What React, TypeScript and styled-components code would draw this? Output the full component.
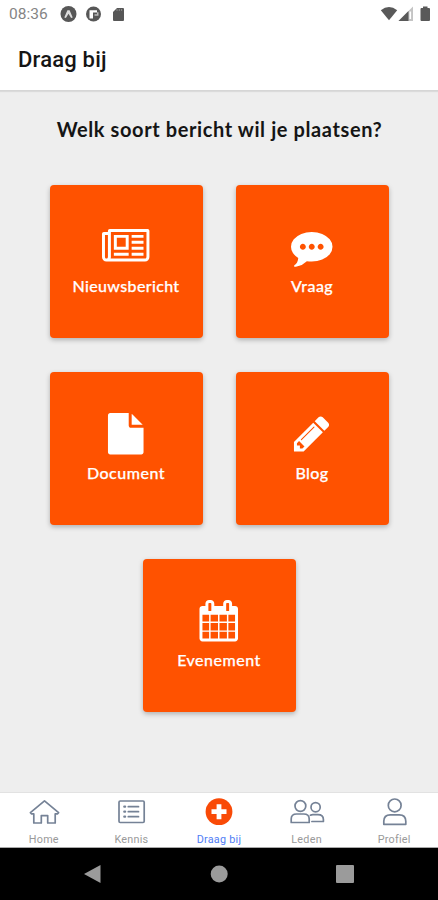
import React from 'react';
import styled, { createGlobalStyle } from 'styled-components';

const GlobalStyle = createGlobalStyle`
  * { box-sizing: border-box; }
  html, body { margin: 0; padding: 0; background: #eee; }
`;

const Screen = styled.div`
  display: flex;
  flex-direction: column;
  width: 438px;
  height: 900px;
  overflow: hidden;
  background: #eeeeee;
  font-family: Lato, 'Open Sans', sans-serif;
`;

const StatusBar = styled.div`
  display: flex;
  justify-content: space-between;
  flex: none;
  height: 28px;
  padding: 0 7px 0 9px;
  background: #fff;
`;

const StatusGroup = styled.div`
  display: flex;
  align-items: center;
  height: 28px;
`;

const Clock = styled.span`
  width: 51px;
  font: 400 15.5px/29px Roboto, sans-serif;
  color: #858585;
`;

const Header = styled.header`
  flex: none;
  height: 63px;
  padding: 0 18px;
  background: #fff;
  border-bottom: 1px solid #d6d6d6;
  box-shadow: 0 1px 1px rgba(0, 0, 0, 0.08);
  font: 500 22px/64px Roboto, sans-serif;
  letter-spacing: 0.2px;
  color: #151515;
`;

const Content = styled.main`
  flex: 1;
  min-height: 0;
`;

const Question = styled.h1`
  margin: 26px 0 44px;
  text-align: center;
  font-size: 20px;
  line-height: 24px;
  font-weight: 700;
  letter-spacing: 0.6px;
  text-indent: 1px;
  white-space: nowrap;
  color: #151515;
`;

const Tiles = styled.div`
  display: flex;
  flex-wrap: wrap;
  justify-content: center;
  gap: 34px 33px;
  width: 400px;
  margin: 0 auto;
`;

const TileButton = styled.button`
  display: flex;
  flex-direction: column;
  align-items: center;
  width: 153px;
  height: 153px;
  padding: 41px 0 0;
  border: 0;
  border-radius: 4px;
  background: #ff5200;
  box-shadow: 0 2px 5px rgba(0, 0, 0, 0.26);
  color: #fff;
`;

const TileIcon = styled.svg`
  display: block;
  flex: none;
  height: 41.5px;
  fill: currentColor;
`;

const TileLabel = styled.span<{ $spacing: number }>`
  margin-top: 8.5px;
  font: 500 16px/20px Lato, 'Open Sans', sans-serif;
  letter-spacing: ${(p) => p.$spacing}px;
  -webkit-text-stroke: 0.25px #fff;
`;

const TabBar = styled.nav`
  display: grid;
  grid-template-columns: repeat(5, 1fr);
  flex: none;
  height: 56px;
  background: #fff;
  border-top: 1px solid #e2e2e2;
  border-bottom: 1px solid #a9a9a9;
`;

const Tab = styled.a<{ $active?: boolean }>`
  display: flex;
  flex-direction: column;
  align-items: center;
  padding-top: 5px;
  color: ${(p) => (p.$active ? '#4f7df5' : '#9a9a9a')};
  font: 400 10.8px/14px Roboto, sans-serif;
  letter-spacing: 0.25px;
`;

const TabIcon = styled.svg`
  display: block;
  width: 36px;
  height: 28px;
  margin-bottom: 7px;
  fill: none;
  stroke: #758296;
  stroke-width: 1.7;
  stroke-linejoin: round;
  stroke-linecap: round;
`;

const SystemBar = styled.div`
  display: grid;
  grid-template-columns: repeat(3, 126px);
  justify-content: center;
  align-items: center;
  justify-items: center;
  flex: none;
  height: 52px;
  background: #000;
`;

const SystemIcon = styled.svg`
  display: block;
  fill: #9b9b9b;
`;

const tiles = [
  {
    label: 'Nieuwsbericht',
    spacing: 0.35,
    width: 2048,
    d: 'M1024 512h-384v384h384v-384zm128 640v128h-640v-128h640zm0-768v640h-640v-640h640zm640 768v128h-512v-128h512zm0-256v128h-512v-128h512zm0-256v128h-512v-128h512zm0-256v128h-512v-128h512zm-1536 960v-960h-128v960q0 26 19 45t45 19 45-19 19-45zm1664 0v-1088h-1536v1088q0 33-11 64h1483q26 0 45-19t19-45zm128-1136v1136q0 80-56 136t-136 56h-1664q-80 0-136-56t-56-136v-1008q0-80 80-80h176v-48q0-80 80-80h1632q80 0 80 80z',
  },
  {
    label: 'Vraag',
    spacing: 0.4,
    width: 1792,
    d: 'M640 896q0-53-37.5-90.5t-90.5-37.5-90.5 37.5-37.5 90.5 37.5 90.5 90.5 37.5 90.5-37.5 37.5-90.5zm384 0q0-53-37.5-90.5t-90.5-37.5-90.5 37.5-37.5 90.5 37.5 90.5 90.5 37.5 90.5-37.5 37.5-90.5zm384 0q0-53-37.5-90.5t-90.5-37.5-90.5 37.5-37.5 90.5 37.5 90.5 90.5 37.5 90.5-37.5 37.5-90.5zm384 0q0 174-120 321.5t-326 233-450 85.5q-110 0-211-18-173 173-435 229-52 10-86 13-12 1-22-6t-13-18q-4-15 20-37 5-5 23.5-21.5t25.5-23.5 23.5-25.5 24-31.5 20.5-37 20-48 14.5-57.5 12.5-72.5q-146-90-229.5-216.5t-83.5-269.5q0-174 120-321.5t326-233 450-85.5 450 85.5 326 233 120 321.5z',
  },
  {
    label: 'Document',
    spacing: 0.5,
    width: 1792,
    d: 'M1152 512v-472q22 14 36 28l408 408q14 14 28 36h-472zm-128 32q0 40 28 68t68 28h544v1056q0 40-28 68t-68 28h-1344q-40 0-68-28t-28-68v-1600q0-40 28-68t68-28h800v544z',
  },
  {
    label: 'Blog',
    spacing: 0.4,
    width: 1792,
    d: 'M491 1536l91-91-235-235-91 91v107h128v128h107zm523-928q0-22-22-22-10 0-17 7l-542 542q-7 7-7 17 0 22 22 22 10 0 17-7l542-542q7-7 7-17zm-54-192l416 416-832 832h-416v-416zm683 96q0 53-37 90l-166 166-416-416 166-165q36-38 90-38 53 0 91 38l235 234q37 39 37 91z',
  },
  {
    label: 'Evenement',
    spacing: 0.5,
    width: 1792,
    d: 'M192 1664h288v-288h-288v288zm352 0h320v-288h-320v288zm-352-352h288v-320h-288v320zm352 0h320v-320h-320v320zm-352-384h288v-288h-288v288zm736 736h320v-288h-320v288zm-384-736h320v-288h-320v288zm768 736h288v-288h-288v288zm-384-352h320v-320h-320v320zm-352-864v-288q0-13-9.5-22.5t-22.5-9.5h-64q-13 0-22.5 9.5t-9.5 22.5v288q0 13 9.5 22.5t22.5 9.5h64q13 0 22.5-9.5t9.5-22.5zm736 864h288v-320h-288v320zm-384-384h320v-288h-320v288zm384 0h288v-288h-288v288zm32-480v-288q0-13-9.5-22.5t-22.5-9.5h-64q-13 0-22.5 9.5t-9.5 22.5v288q0 13 9.5 22.5t22.5 9.5h64q13 0 22.5-9.5t9.5-22.5zm384-64v1280q0 52-38 90t-90 38h-1408q-52 0-90-38t-38-90v-1280q0-52 38-90t90-38h128v-96q0-66 47-113t113-47h64q66 0 113 47t47 113v96h384v-96q0-66 47-113t113-47h64q66 0 113 47t47 113v96h128q52 0 90 38t38 90z',
  },
];

const tabs = [
  {
    label: 'Home',
    icon: <path d="M4.4 14.6 18.500 2.800l14.100 11.800-1.200 1.300h-2.200V25h-7.500v-7.400h-6.400V25H7.800v-9.100H5.600z" />,
  },
  {
    label: 'Kennis',
    icon: (
      <>
        <rect x="6" y="3" width="25.200" height="21.500" rx="1.200" />
        <path d="M15.300 8.700h10.200M15.300 13.700h10.200M15.300 18.700h10.200" />
        <path d="M11.300 8.700h.8M11.300 13.700h.8M11.300 18.700h.8" strokeWidth="2.300" />
      </>
    ),
  },
  {
    label: 'Draag bij',
    active: true,
    icon: (
      <>
        <circle cx="18" cy="13.700" r="13.400" fill="#f94a07" stroke="none" />
        <path d="M18 6.200v15M10.500 13.700h15" stroke="#fff" strokeWidth="4.800" strokeLinecap="butt" />
      </>
    ),
  },
  {
    label: 'Leden',
    icon: (
      <>
        <circle cx="11.400" cy="8" r="5.400" />
        <circle cx="26.600" cy="9.200" r="4.600" />
        <path d="M2.200 24.500v-3.500q0-5 5.500-5h7q5.500 0 5.500 5v3.500zM21.400 17.200q1-.6 2.500-.6h5q5.500 0 5.500 5v1.900H22.900" />
      </>
    ),
  },
  {
    label: 'Profiel',
    icon: (
      <>
        <circle cx="18.700" cy="7.400" r="6.400" />
        <path d="M7.800 26.300v-3q0-6.500 6.500-6.500h9q6.500 0 6.500 6.500v3z" />
      </>
    ),
  },
];

const NotificationIcons = () => (
  <svg width="66" height="18" viewBox="60 5 66 18" fill="#575757">
    <circle cx="68.500" cy="14" r="8" />
    <path d="m64.300 17.500 3.100-7.300h2.200l3.100 7.300-1.600.5-2.600-4.300-2.600 4.300z" fill="#ddd" />
    <circle cx="93.500" cy="14" r="7.500" />
    <path d="M89.500 10.200h7.500v2.200h-4v6.200h-3.500z" fill="#fff" />
    <path d="M94.500 14.200h2.500v-2h1.500v3.600h-4z" fill="#bbb" />
    <path d="M117 8h6q1 0 1 1v11q0 1-1 1h-9q-1 0-1-1v-8z" />
    <path d="M117 9v2M119.300 9v2M121.600 9v2" stroke="#999" strokeWidth=".8" />
  </svg>
);

const SignalIcons = () => (
  <svg width="51" height="18" viewBox="380 5 51 18" fill="#595959">
    <path d="M380.800 10.300q8.200-6.500 16.400 0L389 20.300z" />
    <path d="M413 6.500V21h-14.500z" fill="#c4c4c4" />
    <path d="M408.500 11v10h-10z" />
    <path d="M410.300 11.500v7.500" stroke="#fff" strokeWidth="1.600" />
    <path d="M423 8v-1.500h4.500V8h1.500q1 0 1 1v11q0 1-1 1h-7.500q-1 0-1-1V9q0-1 1-1z" />
  </svg>
);

export default function App() {
  return (
    <Screen>
      <GlobalStyle />
      <StatusBar>
        <StatusGroup>
          <Clock>08:36</Clock>
          <NotificationIcons />
        </StatusGroup>
        <StatusGroup>
          <SignalIcons />
        </StatusGroup>
      </StatusBar>
      <Header>Draag bij</Header>
      <Content>
        <Question>Welk soort bericht wil je plaatsen?</Question>
        <Tiles>
          {tiles.map((tile) => (
            <TileButton key={tile.label}>
              <TileIcon viewBox={`0 0 ${tile.width} 1792`}>
                <path d={tile.d} />
              </TileIcon>
              <TileLabel $spacing={tile.spacing}>{tile.label}</TileLabel>
            </TileButton>
          ))}
        </Tiles>
      </Content>
      <TabBar>
        {tabs.map((tab) => (
          <Tab key={tab.label} $active={tab.active}>
            <TabIcon viewBox="0 0 36 28">{tab.icon}</TabIcon>
            {tab.label}
          </Tab>
        ))}
      </TabBar>
      <SystemBar>
        <SystemIcon width="18" height="20" viewBox="0 0 18 20">
          <path d="M16.500 1v18L0 10z" />
        </SystemIcon>
        <SystemIcon width="18" height="18" viewBox="0 0 18 18">
          <circle cx="9.200" cy="9" r="8.500" />
        </SystemIcon>
        <SystemIcon width="18" height="18" viewBox="0 0 18 18">
          <rect width="18" height="18" rx="1" />
        </SystemIcon>
      </SystemBar>
    </Screen>
  );
}
